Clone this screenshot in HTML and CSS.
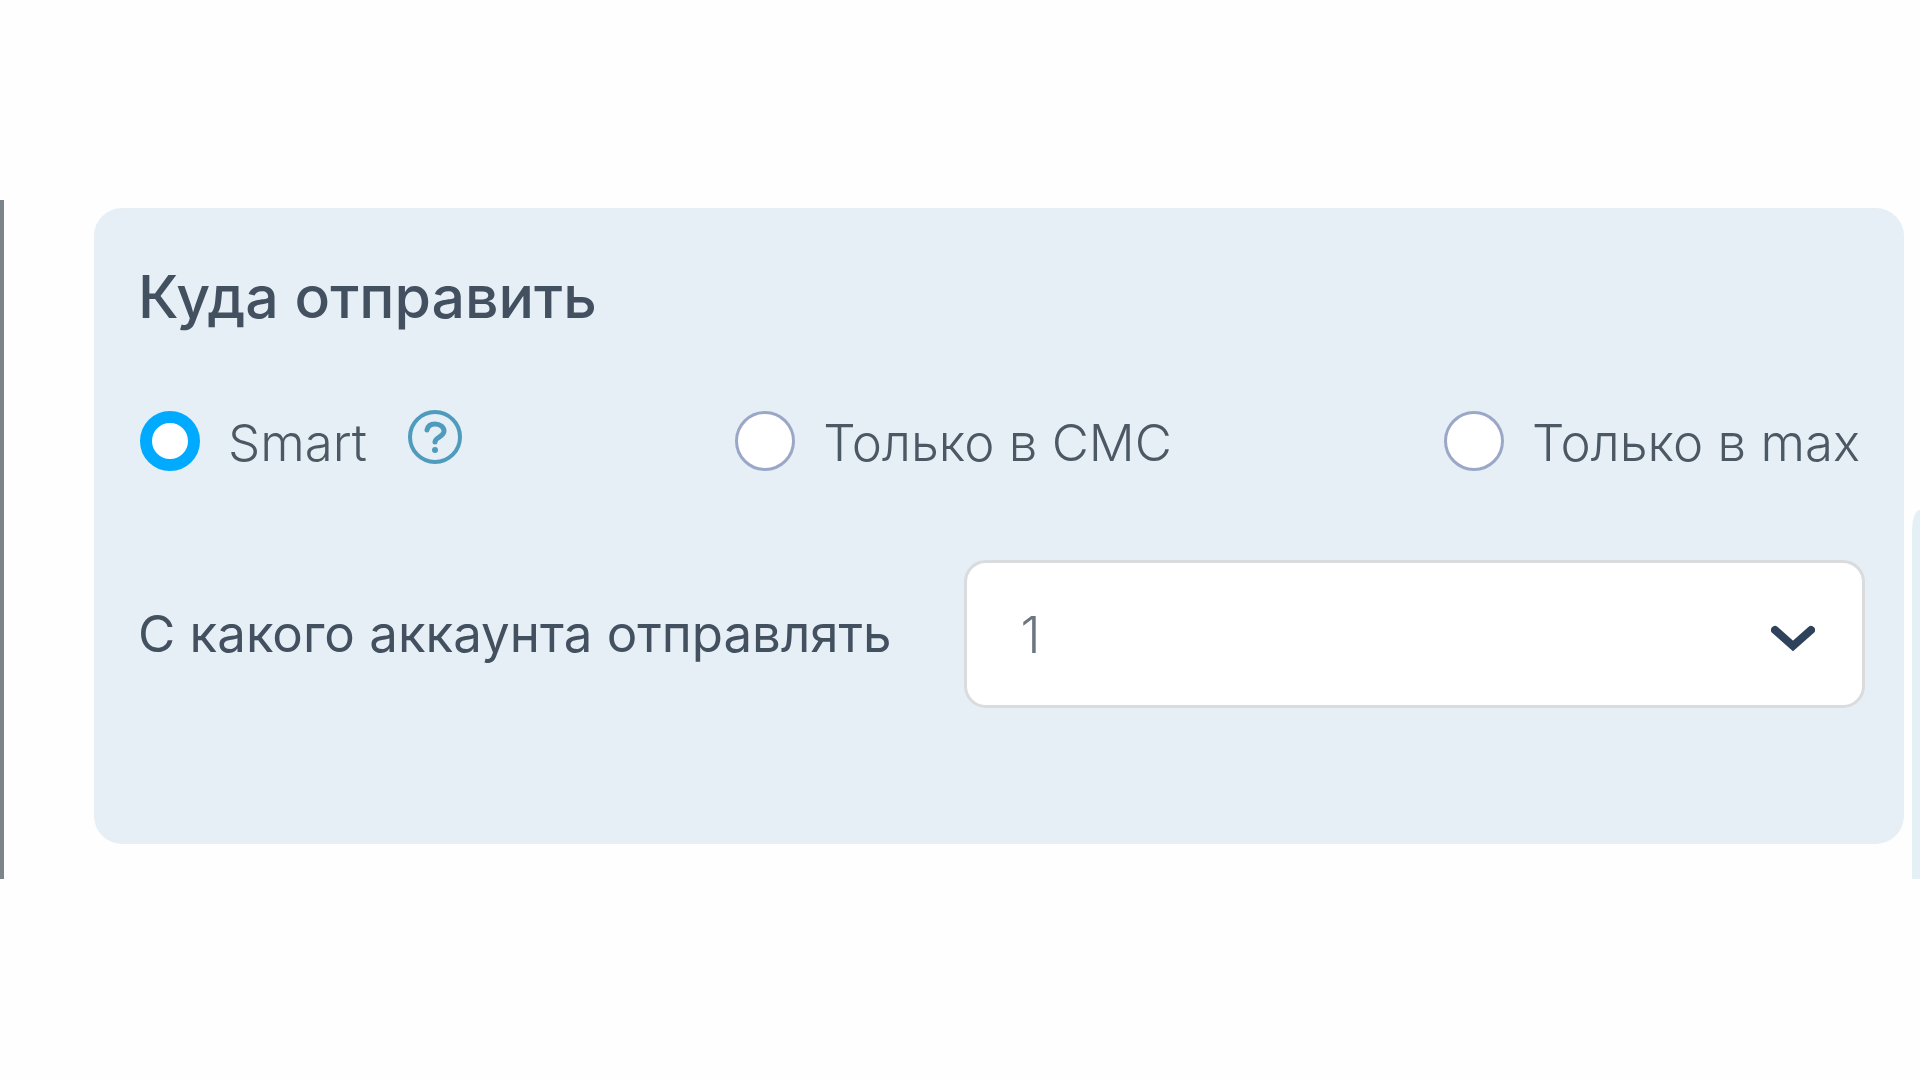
FILE: index.html
```html
<!DOCTYPE html>
<html lang="ru">
<head>
  <meta charset="UTF-8">
  <meta name="viewport" content="width=device-width, initial-scale=1.0">
  <title>Куда отправить</title>
  <link rel="stylesheet" href="styles.css">
</head>
<body>

  <div class="page">
    <div class="edge"></div>

    <form class="panel">
      <h2>Куда отправить</h2>

      <div class="options">
        <div class="option">
          <input type="radio" name="channel" id="smart" checked>
          <label for="smart">Smart</label>
          <button type="button" class="help" aria-label="Подсказка">
            <svg viewBox="0 0 56 56" fill="none" stroke="#4f9bbd" stroke-width="4" stroke-linecap="round" stroke-linejoin="round">
              <circle cx="28" cy="28" r="25"/>
              <path stroke-width="5" d="M20 21C21 16 24 15 28 15c5 0 9 3 9 7 0 6-9 6-9 11"/>
              <circle cx="28" cy="41" r="3" fill="#4f9bbd" stroke="none"/>
            </svg>
          </button>
        </div>
        <div class="option">
          <input type="radio" name="channel" id="sms">
          <label for="sms">Только в СМС</label>
        </div>
        <div class="option">
          <input type="radio" name="channel" id="max">
          <label for="max">Только в max</label>
        </div>
      </div>

      <div class="account">
        <label for="account">С какого аккаунта отправлять</label>
        <div class="select">
          <select id="account">
            <option>1</option>
          </select>
          <svg class="arrow" viewBox="0 0 44 28" fill="none" stroke="#2f425b" stroke-width="8" stroke-linecap="round">
            <path d="M4 6l18 16L40 6"/>
          </svg>
        </div>
      </div>
    </form>

    <div class="next-panel"></div>
  </div>

</body>
</html>
```

FILE: styles.css
```css
* {
  box-sizing: border-box;
}

body {
  margin: 0;
  background-color: #fefefe;
  color: #435060;
  font-family: Inter, "Open Sans", sans-serif;
}

.page {
  display: flex;
  margin-top: 200px;
}

.edge {
  width: 4px;
  background-color: #7c8589;
}

.panel {
  flex: 1;
  margin: 8px 8px 35px 90px;
  padding: 51px 39px 136px 44px;
  background-color: #e6eff5;
  border-radius: 28px;
}

.next-panel {
  width: 8px;
  margin-top: 310px;
  background-color: #e4f0f5;
  border-radius: 8px 0 0 0 / 20px 0 0 0;
}

h2 {
  margin: 0 0 68px;
  font-size: 59px;
  font-weight: 500;
  line-height: 76px;
}

.options {
  display: flex;
  justify-content: space-between;
  margin: 0 5px 81px 2px;
}

.option {
  display: flex;
  align-items: center;
  color: #4c5964;
  font-size: 51px;
  font-weight: 300;
  line-height: 72px;
}

.option label {
  padding-top: 4px;
}

.option input {
  appearance: none;
  width: 60px;
  height: 60px;
  margin: 0 28px 0 0;
  background-color: white;
  border: 3px solid #9aa7c7;
  border-radius: 50%;
}

.option input:checked {
  border: 12px solid #00aaff;
}

.help {
  width: 56px;
  height: 56px;
  margin: 0 0 8px 40px;
  padding: 0;
  background: none;
  border: none;
}

.help svg {
  display: block;
}

.account {
  display: flex;
  align-items: center;
  gap: 72px;
  font-size: 51px;
  line-height: 72px;
}

.select {
  position: relative;
  flex: 1;
}

.select select {
  appearance: none;
  display: block;
  width: 100%;
  height: 148px;
  padding: 0 54px;
  background-color: white;
  border: 3px solid #d9dbdd;
  border-radius: 22px;
  color: #6b7680;
  font-family: inherit;
  font-size: 51px;
  font-weight: 300;
}

/* arrow sits over the select */
.arrow {
  position: absolute;
  top: 64px;
  right: 50px;
  width: 44px;
  height: 28px;
  pointer-events: none;
}
```
